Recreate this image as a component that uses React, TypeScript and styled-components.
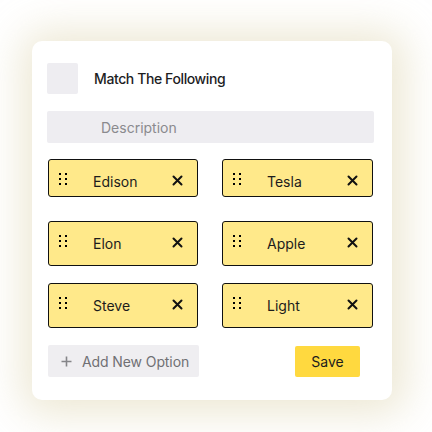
import React from 'react'
import styled, { createGlobalStyle } from 'styled-components'

const GlobalStyle = createGlobalStyle`
	html, body {
		margin: 0;
		padding: 0;
		background: #ffffff;
		font-family: Inter, 'Noto Sans', sans-serif;
	}
`

const Page = styled.div`
	width: 432px;
	height: 432px;
	padding: 41px 0 0 32px;
	box-sizing: border-box;
`

const Card = styled.div`
	width: 360px;
	height: 359px;
	box-sizing: border-box;
	padding: 22px 18px 0 15px;
	background: #ffffff;
	border-radius: 10px;
	box-shadow: 2px 2px 40px 12px rgba(222, 214, 176, 0.55);
	display: flex;
	flex-direction: column;
`

const Header = styled.div`
	display: flex;
	align-items: center;
	gap: 16px;
`

const Thumb = styled.div`
	width: 31px;
	height: 31px;
	border-radius: 2px;
	background: #eeedf1;
`

const Title = styled.span`
	font-size: 14px;
	font-weight: 500;
	color: #1d1d1f;
	letter-spacing: -0.4px;
`

const Description = styled.div`
	margin-top: 17px;
	height: 32px;
	display: flex;
	align-items: center;
	padding-left: 54px;
	background: #eeedf1;
	border-radius: 2px;
	font-size: 14px;
	color: #8a8a8e;
`

const Grid = styled.div`
	margin: 16px 1px 0 1px;
	display: grid;
	grid-template-columns: 150px 151px;
	grid-auto-rows: 62px;
	column-gap: 24px;
`

const Option = styled.div<{ $height: number }>`
	height: ${(p) => p.$height}px;
	box-sizing: border-box;
	border: 1px solid #111111;
	border-radius: 3px;
	background: #ffe98a;
	display: flex;
	align-items: flex-start;
	padding: 0 14px 0 10px;
`

const Handle = styled.div`
	width: 8px;
	display: grid;
	grid-template-columns: 2px 2px;
	column-gap: 4px;
	row-gap: 3px;
	margin-top: 13px;
	span {
		width: 2px;
		height: 2px;
		background: #000000;
	}
`

const Label = styled.span`
	flex: 1;
	margin-left: 26px;
	margin-top: 14px;
	font-size: 14px;
	line-height: 16px;
	color: #1c1c1c;
`

const Remove = styled.svg`
	margin-top: 15px;
`

const Footer = styled.div`
	display: flex;
	align-items: flex-start;
	justify-content: space-between;
	padding-left: 1px;
	padding-right: 14px;
`

const AddButton = styled.div`
	width: 151px;
	height: 32px;
	box-sizing: border-box;
	background: #efeef1;
	border-radius: 2px;
	display: flex;
	align-items: center;
	padding-left: 13px;
	gap: 10px;
	font-size: 14px;
	color: #707074;
	letter-spacing: -0.1px;
`

const SaveButton = styled.div`
	margin-top: 1px;
	width: 65px;
	height: 31px;
	background: #ffd93f;
	border-radius: 2px;
	display: flex;
	align-items: center;
	justify-content: center;
	font-size: 14px;
	color: #1c1c1c;
`

const options = [
	['Edison', 'Tesla'],
	['Elon', 'Apple'],
	['Steve', 'Light'],
]

const DragHandle = () => (
	<Handle>
		{Array.from({ length: 6 }).map((_, i) => (
			<span key={i} />
		))}
	</Handle>
)

const OptionBox = ({ label, height }: { label: string; height: number }) => (
	<Option $height={height}>
		<DragHandle />
		<Label>{label}</Label>
		<Remove width="11" height="11" viewBox="0 0 11 11">
			<path d="M1.5 1.5 L9.5 9.5 M9.5 1.5 L1.5 9.5" stroke="#111" strokeWidth="2" strokeLinecap="round" />
		</Remove>
	</Option>
)

export default function App() {
	return (
		<Page>
			<GlobalStyle />
			<Card>
				<Header>
					<Thumb />
					<Title>Match The Following</Title>
				</Header>
				<Description>Description</Description>
				<Grid>
					{options.map((row, r) =>
						row.map((label) => <OptionBox key={label} label={label} height={r === 0 ? 38 : 45} />),
					)}
				</Grid>
				<Footer>
					<AddButton>
						<svg width="11" height="11" viewBox="0 0 11 11">
							<path d="M5.5 0.5 V10.5 M0.5 5.5 H10.5" stroke="#858589" strokeWidth="1.6" />
						</svg>
						Add New Option
					</AddButton>
					<SaveButton>Save</SaveButton>
				</Footer>
			</Card>
		</Page>
	)
}
